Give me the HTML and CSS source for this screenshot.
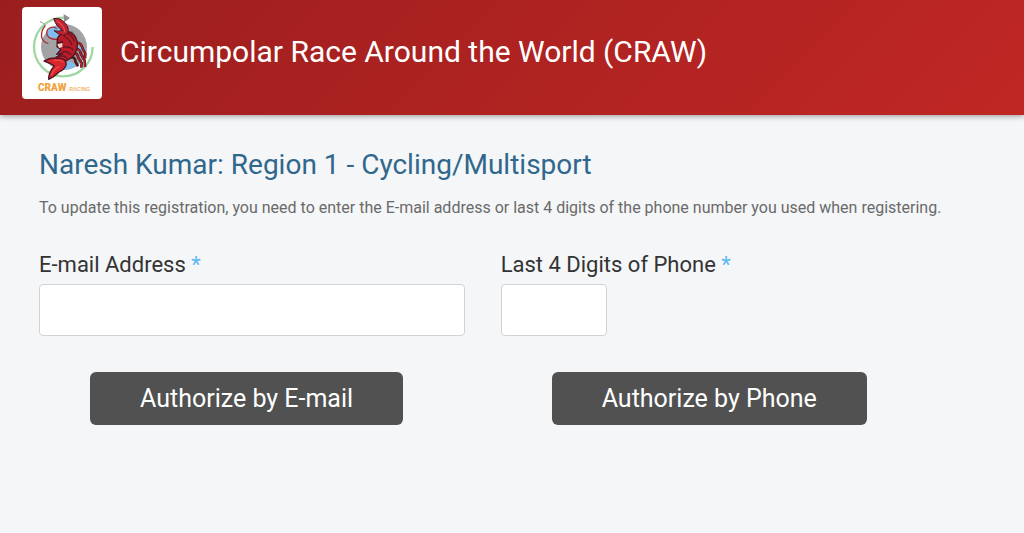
FILE: index.html
```html
<!DOCTYPE html>
<html lang="en">
<head>
	<meta charset="UTF-8">
	<meta name="viewport" content="width=device-width, initial-scale=1.0">
	<title>Circumpolar Race Around the World (CRAW)</title>
	<link rel="stylesheet" href="styles.css">
</head>
<body>

<header class="banner">
	<svg class="logo" viewBox="18 21 240 276" role="img" aria-label="CRAW Racing">
		<!-- globe -->
		<circle cx="144" cy="141" r="69" fill="#a3a3a5"/>
		<path d="M92 96 L106 82 L122 80 L138 86 L146 104 L132 118 L110 112 L94 114 Z" fill="#7fbdf0"/>
		<path d="M122 150 L134 144 L132 170 L120 176 Z M186 138 L210 146 L211 154 L190 152 Z M140 196 L158 184 L182 196 L164 207 L140 209 Z" fill="#7fbdf0"/>
		<path d="M148 90 L174 96 L160 106 Z" fill="#6f6f72"/>
		<!-- route ring and arrow -->
		<path d="M145 53 A88 88 0 1 0 230 141" fill="none" stroke="#a0d8a4" stroke-width="7"/>
		<path d="M143 42 L162 54 L144 67 Z" fill="#909092"/>
		<!-- antennae -->
		<path d="M72 65 Q84 67 88 78" fill="none" stroke="#999" stroke-width="3"/>
		<path d="M88 77 Q74 92 77 112 Q82 128 97 130" fill="none" stroke="#a82c32" stroke-width="4"/>
		<path d="M128 118 Q102 120 94 106 Q88 92 101 84 Q112 78 122 86" fill="none" stroke="#a82c32" stroke-width="4"/>
		<!-- legs -->
		<path d="M168 138 Q192 116 200 146 L208 160 L207 175 M170 150 Q190 140 195 162 L206 182 L207 201 M166 164 Q184 152 187 174 L197 188 L196 203 M164 172 Q178 170 178 184 L186 199" fill="none" stroke="#451a22" stroke-width="8" stroke-linejoin="round"/>
		<path d="M168 138 Q192 116 200 146 L208 160 L207 175 M170 150 Q190 140 195 162 L206 182 L207 201 M166 164 Q184 152 187 174 L197 188 L196 203" fill="none" stroke="#b91f29" stroke-width="4"/>
		<!-- body -->
		<path d="M124 116 Q132 98 152 94 Q178 98 183 123 Q187 142 177 160 Q170 176 148 183 L124 184 L120 172 L139 161 L122 163 L134 148 L123 140 Z" fill="#b71c27" stroke="#4a1720" stroke-width="4" stroke-linejoin="round"/>
		<path d="M152 98 Q170 107 175 124 M144 108 Q162 118 168 136 M141 142 Q160 136 172 151 M137 157 Q155 150 165 165 M130 170 Q147 163 153 177" fill="none" stroke="#641823" stroke-width="4"/>
		<path d="M124 133 L139 129 L139 141 L129 144 Z" fill="#eadbd0"/>
		<path d="M124 128 L141 126" stroke="#371820" stroke-width="4"/>
		<!-- upper claw -->
		<path d="M113 56 Q132 52 147 68 Q161 84 155 101 L143 106 Q127 104 114 92 Q129 96 140 91 Q122 82 113 56 Z" fill="#c52230" stroke="#4a1720" stroke-width="3"/>
		<path d="M121 62 Q142 72 147 96" fill="none" stroke="#e44b50" stroke-width="4"/>
		<!-- lower claw -->
		<path d="M84 183 Q104 171 127 175 Q149 174 151 192 Q148 208 129 216 Q116 230 98 238 Q97 218 115 198 Q101 188 84 183 Z" fill="#d9262e" stroke="#4a1720" stroke-width="4" stroke-linejoin="round"/>
		<path d="M113 181 Q136 178 142 187 M106 226 Q114 205 130 199" fill="none" stroke="#f04a47" stroke-width="4"/>
		<text class="logo-name" x="66" y="272">CRAW</text>
		<text class="logo-suffix" x="155" y="273">.RACING</text>
	</svg>
	<h1>Circumpolar Race Around the World (CRAW)</h1>
</header>

<main class="content">
	<h2>Naresh Kumar: Region 1 - Cycling/Multisport</h2>
	<p class="intro">To update this registration, you need to enter the E-mail address or last 4 digits of the phone number you used when registering.</p>

	<div class="options">
		<form class="option">
			<label for="email">E-mail Address <span class="required">*</span></label>
			<input type="email" id="email" class="email-input" required>
			<button type="submit">Authorize by E-mail</button>
		</form>
		<form class="option">
			<label for="phone">Last 4 Digits of Phone <span class="required">*</span></label>
			<input type="text" id="phone" class="phone-input" maxlength="4" required>
			<button type="submit">Authorize by Phone</button>
		</form>
	</div>
</main>

</body>
</html>
```
FILE: styles.css
```css
* {
	box-sizing: border-box;
}
body {
	margin: 0;
	font-family: Roboto, sans-serif;
	background-color: #f4f6f8;
	color: #333;
}
.banner {
	display: flex;
	align-items: flex-start;
	gap: 18px;
	padding: 7px 22px 16px;
	background: linear-gradient(135deg, #9b1e1e, #c02724);
	box-shadow: 0 1px 6px rgba(0, 0, 0, 0.4);
}
.logo {
	flex: none;
	width: 80px;
	height: 92px;
	background-color: #fff;
	border-radius: 4px;
}
.logo-name {
	font-family: Roboto, sans-serif;
	font-size: 30px;
	font-weight: 900;
	fill: #f2a03a;
}
.logo-suffix {
	font-family: "Liberation Sans", sans-serif;
	font-size: 16px;
	font-weight: 700;
	fill: #f4b26c;
}
h1, h2 {
	margin: 0;
	font-weight: 400;
}
h1 {
	padding-top: 27px;
	font-size: 30px;
	line-height: 36px;
	color: #fff;
}
.content {
	padding: 32px 39px;
}
h2 {
	font-size: 28px;
	line-height: 36px;
	color: #30678c;
}
.intro {
	margin: 15px 0 32px;
	font-size: 16px;
	line-height: 20px;
	color: #6a6a6a;
}
.options {
	display: grid;
	grid-template-columns: 45% 45%;
	gap: 36px;
}
label {
	display: block;
	margin-bottom: 4px;
	font-size: 22px;
	line-height: 30px;
}
.required {
	color: #5bb8f0;
}
input {
	display: block;
	height: 52px;
	padding: 8px 12px;
	border: 1px solid #d0d2d3;
	border-radius: 4px;
	background-color: #fff;
	font-family: inherit;
	font-size: 22px;
}
.email-input {
	width: 100%;
}
.phone-input {
	width: 25%;
}
button {
	margin: 36px 0 0 51px;
	padding: 8px 50px;
	border: 0;
	border-radius: 6px;
	background-color: #515151;
	color: #fff;
	font-family: inherit;
	font-size: 25px;
	line-height: 37px;
	cursor: pointer;
}
button:hover {
	background-color: #3f3f3f;
}
```
